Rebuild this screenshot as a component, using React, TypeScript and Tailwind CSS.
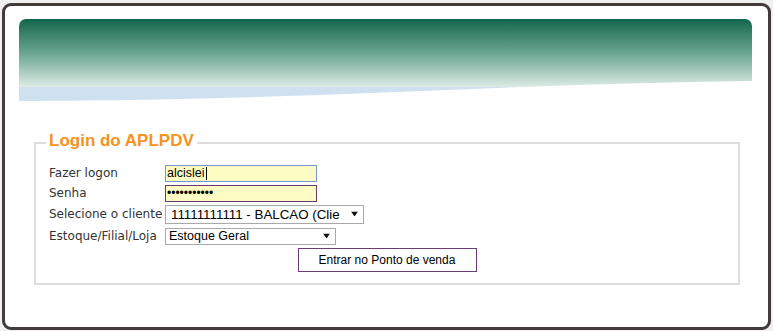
import { ReactNode } from "react";

const labelFont = "font-['DejaVu_Sans',Verdana,sans-serif] text-[12px] text-[#333]";
const fieldFont = "font-['Liberation_Sans',Arial,sans-serif] text-black";

function Arrow() {
  return (
    <svg
      className="pointer-events-none absolute right-[6px] top-1/2 -translate-y-1/2"
      width="7"
      height="5"
      viewBox="0 0 7 5"
    >
      <polygon points="0,0 7,0 3.5,5" fill="#111" />
    </svg>
  );
}

function Row({ label, h, children }: { label: string; h: string; children: ReactNode }) {
  return (
    <div className={"flex items-center " + h}>
      <span className={"w-[116px] leading-none " + labelFont}>{label}</span>
      {children}
    </div>
  );
}

export default function App() {
  return (
    <div className="min-h-[331px] bg-[#f0f0f0] pl-[2px] pt-[3px]">
      <div className="h-[327px] w-[769px] rounded-[9px] border-[3px] border-[#433a3a] bg-white pl-[14px] pt-[13px]">
        {/* banner */}
        <div className="relative h-[82px] w-[733px] overflow-hidden rounded-t-[7px]">
          <div className="h-[68px] bg-gradient-to-b from-[#0b674c] via-[#6aa592] to-[#dcebe5]" />
          <div className="h-[14px] bg-[#cfe1f1]" />
          <svg className="absolute bottom-0 left-0" width="733" height="82" viewBox="0 0 733 82">
            <path d="M0,82 C300,81 450,66 733,62 L733,82 Z" fill="#fff" />
          </svg>
        </div>

        <fieldset className="ml-[15px] mt-[30px] w-[706px] border-2 border-[#dddddd] pb-[10px] pl-[13px] pt-[8px]">
          <legend className="-ml-[3px] px-[3px] pb-[4px] font-['Liberation_Sans',Arial,sans-serif] text-[17px] font-bold leading-[20px] text-[#f7931d]">
            Login do APLPDV
          </legend>

          <Row label="Fazer logon" h="h-[20px]">
            <div className="relative">
              <input
                readOnly
                value="alcislei"
                className={
                  "block h-[17px] w-[152px] border border-[#7596d2] bg-[#fdfdc3] px-[1px] text-[12.5px] outline-none " +
                  fieldFont
                }
              />
              <span className="absolute left-[41px] top-[2px] h-[13px] w-px bg-black" />
            </div>
          </Row>

          <Row label="Senha" h="h-[20px]">
            <input
              readOnly
              type="password"
              value="alcislei123"
              className={
                "block h-[17px] w-[152px] border border-[#6d3a6e] bg-[#fdfdc3] px-[1px] text-[12px] outline-none " +
                fieldFont
              }
            />
          </Row>

          <Row label="Selecione o cliente" h="h-[22px]">
            <div className="relative">
              <select
                defaultValue="1"
                className={
                  "block h-[19px] w-[199px] appearance-none rounded-none border border-[#a9a9a9] bg-white pl-[5px] pr-[23px] text-[13.33px] leading-[17px] outline-none " +
                  fieldFont
                }
              >
                <option value="1">11111111111 - BALCAO (Cliente)</option>
              </select>
              <Arrow />
            </div>
          </Row>

          <Row label="Estoque/Filial/Loja" h="h-[22px]">
            <div className="relative">
              <select
                defaultValue="1"
                className={
                  "block h-[17px] w-[171px] appearance-none rounded-none border border-[#a9a9a9] bg-white pl-[3px] pr-[20px] text-[12.5px] leading-[15px] outline-none " +
                  fieldFont
                }
              >
                <option value="1">Estoque Geral</option>
              </select>
              <Arrow />
            </div>
          </Row>

          <div className="flex h-[26px] items-center justify-center pr-[13px]">
            <button
              className={
                "h-[24px] w-[179px] border border-[#6c3a77] bg-white text-[12px] text-[#1a1a1a] " +
                fieldFont
              }
            >
              Entrar no Ponto de venda
            </button>
          </div>
        </fieldset>
      </div>
    </div>
  );
}
